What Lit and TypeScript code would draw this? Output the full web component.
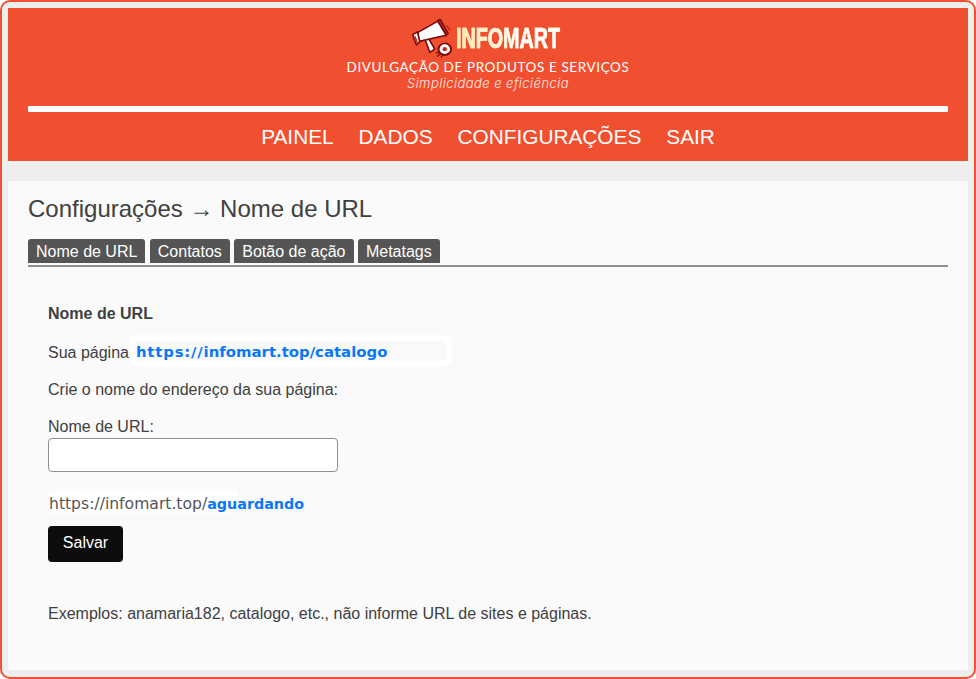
import { LitElement, html, css } from "lit";
import { customElement } from "lit/decorators.js";

@customElement("app-root")
export class AppRoot extends LitElement {
  static styles = css`
    :host { display: block; height: 679px; font-family: "Liberation Sans", Arial, sans-serif; color: #333; }
    .frame { box-sizing: border-box; height: 679px; border: 2px solid #f25032; border-radius: 10px; background: #eeeeee; padding: 6px 6px 7px; display: flex; flex-direction: column; }
    header { background: #f15030; height: 153px; box-sizing: border-box; padding: 0 20px; display: flex; flex-direction: column; align-items: center; flex: none; }
    .logo { height: 98px; display: flex; flex-direction: column; align-items: center; color: #fff; box-sizing: border-box; padding-top: 10px; }
    .brand { display: flex; align-items: center; height: 40px; margin-left: -1px; }
    .brand svg { width: 40px; height: 40px; display: block; margin-right: 4px; }
    .name-box { width: 106px; height: 40px; display: block; }
    .name { display: inline-block; font-weight: 700; font-size: 29px; line-height: 40px; transform: scaleX(0.68); transform-origin: left center; background: linear-gradient(90deg, #ffe6a6, #fff 60%); -webkit-background-clip: text; background-clip: text; -webkit-text-fill-color: transparent; -webkit-text-stroke: 0.7px #fff3d0; white-space: nowrap; }
    .sub { font-family: Lato, sans-serif; font-size: 13.5px; line-height: 16px; letter-spacing: 0.6px; margin-top: 1px; color: #fff; white-space: nowrap; }
    .slogan { font-family: Inter, sans-serif; font-style: italic; font-weight: 300; font-size: 13px; line-height: 15px; letter-spacing: 0.45px; color: #ffe9e2; white-space: nowrap; margin-top: 1px; }
    .rule { align-self: stretch; height: 6px; background: #fff; flex: none; }
    nav { display: flex; justify-content: center; gap: 25px; font-size: 20.8px; line-height: 24px; color: #fff; padding-top: 13px; }
    main { margin-top: 20px; flex: 1; background: #fafafa; padding: 0 20px; }
    h1 { font-weight: 400; font-size: 24px; line-height: 28px; margin: 0; padding-top: 14px; color: #404040; }
    .tabs { display: flex; gap: 4.45px; margin-top: 16px; border-bottom: 2px solid #8f8f8f; padding-bottom: 2px; }
    .tab { background: #555; color: #fff; font-size: 16px; line-height: 18px; padding: 4px 8px 2px; border-radius: 3px 3px 0 0; }
    .body { padding: 0 20px; font-size: 16px; line-height: 18px; color: #404040; }
    .title { font-weight: 700; margin-top: 38px; }
    .page { display: flex; align-items: center; margin-top: 12px; height: 31px; }
    .lbl { padding-top: 4px; }
    .url-box { margin-left: 1px; background: #fff; border-radius: 8px; padding: 6px 6px 5px; }
    .url { display: block; width: 310px; background: #f9f9f9; font-family: "DejaVu Sans", sans-serif; font-weight: 700; font-size: 14.9px; line-height: 17px; padding-top: 3px; color: #0a78f5; white-space: nowrap; }
    .proto { letter-spacing: 0.8px; }
    .make { margin-top: 15px; }
    label { display: block; margin-top: 19px; }
    input { display: block; box-sizing: border-box; width: 290px; height: 34px; margin: 2px 0 0; background: #fff; border: 1px solid #8f8f8f; border-radius: 4px; padding: 0 8px; }
    .preview { margin-top: 19px; margin-left: 1px; padding-top: 5px; font-family: "DejaVu Sans", sans-serif; font-size: 15.6px; line-height: 17px; color: #555; white-space: nowrap; background: linear-gradient(#fff, #fff) no-repeat; background-size: 189px 100%; }
    .preview b { color: #0a78f5; font-size: 14.3px; }
    button { display: block; margin-top: 13px; width: 75px; height: 36px; background: #0d0d0d; color: #fff; border: 0; border-radius: 4px; font: 16px "Liberation Sans", sans-serif; padding: 0 0 2px; }
    .examples { margin-top: 43px; }
  `;

  render() {
    const tabs = ["Nome de URL", "Contatos", "Botão de ação", "Metatags"];
    return html`
      <div class="frame">
        <header>
          <div class="logo">
            <div class="brand">
              <svg viewBox="1.5 0 36 38.5" preserveAspectRatio="none" aria-hidden="true">
                <g stroke="#7d0a0a" stroke-width="1.5" stroke-linejoin="round">
                  <path d="M13 20 L16 19 L22 30 L17.5 33 Z" fill="#fff"/>
                  <path d="M24.5 2.5 L27 1.5 L34 15 L32 17 Z" fill="#c9281b"/>
                  <path d="M6.5 14 L24.7 3 L32.3 16.7 L8 22.5 Z" fill="#fff"/>
                  <path d="M6.5 13.5 L2 16 L5.5 26 L8.5 23 Z" fill="#fff"/>
                  <path d="M32.5 7 L36 12" fill="none" stroke="#c9281b"/>
                </g>
                <path d="M4 17.5 L6.5 24" stroke="#c9281b" stroke-width="1.4"/>
                <circle cx="31" cy="30" r="5.6" fill="#fff" stroke="#7d0a0a" stroke-width="1.8"/>
                <circle cx="31" cy="30" r="2" fill="#c8281c"/>
                <path d="M23 34 l3 -1.5 M24 37 l3.5 -3 M27.5 38 l2 -2.5" stroke="#7d0a0a" stroke-width="1.2" fill="none"/>
              </svg>
              <span class="name-box"><span class="name">INFOMART</span></span>
            </div>
            <div class="sub">DIVULGAÇÃO DE PRODUTOS E SERVIÇOS</div>
            <div class="slogan">Simplicidade e eficiência</div>
          </div>
          <div class="rule"></div>
          <nav><span>PAINEL</span><span>DADOS</span><span>CONFIGURAÇÕES</span><span>SAIR</span></nav>
        </header>
        <main>
          <h1>Configurações → Nome de URL</h1>
          <div class="tabs">${tabs.map((t) => html`<span class="tab">${t}</span>`)}</div>
          <div class="body">
            <div class="title">Nome de URL</div>
            <div class="page"><span class="lbl">Sua página</span><span class="url-box"><span class="url"><span class="proto">https://</span>infomart.top/catalogo</span></span></div>
            <div class="make">Crie o nome do endereço da sua página:</div>
            <label for="u">Nome de URL:</label>
            <input id="u" type="text" />
            <div class="preview">https://infomart.top/<b>aguardando</b></div>
            <button>Salvar</button>
            <div class="examples">Exemplos: anamaria182, catalogo, etc., não informe URL de sites e páginas.</div>
          </div>
        </main>
      </div>
    `;
  }
}
